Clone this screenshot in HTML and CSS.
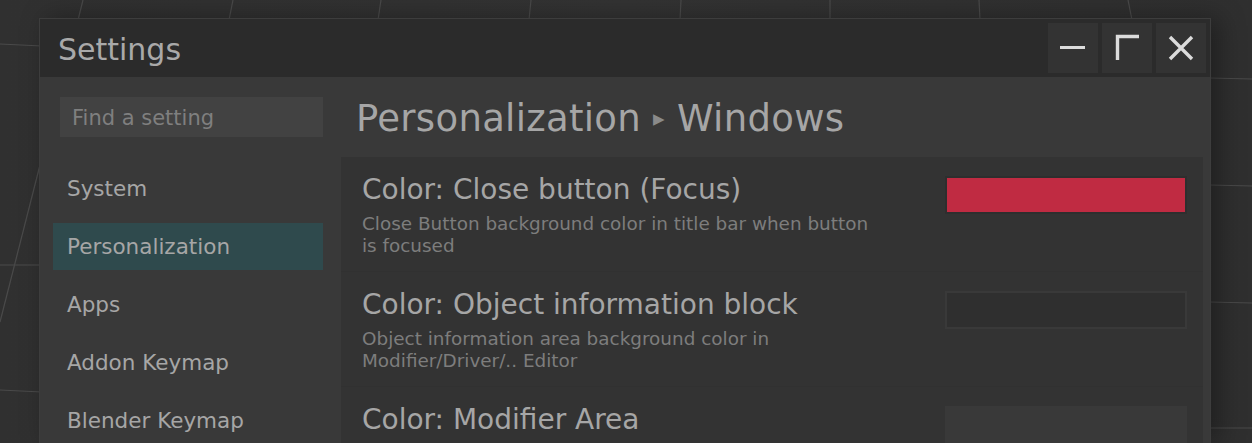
FILE: index.html
```html
<!DOCTYPE html>
<html>
<head>
<meta charset="utf-8">
<link rel="stylesheet" href="styles.css">
</head>
<body>
<svg class="grid" width="1252" height="443" viewBox="0 0 1252 443">
  <g stroke="#4a4a4a" stroke-width="1.2" fill="none">
    <line x1="83" y1="0" x2="78" y2="20"/>
    <line x1="233" y1="0" x2="229" y2="20"/>
    <line x1="381" y1="0" x2="378" y2="20"/>
    <line x1="531" y1="0" x2="529" y2="20"/>
    <line x1="681" y1="0" x2="680" y2="20"/>
    <line x1="830" y1="0" x2="830" y2="20"/>
    <line x1="979" y1="0" x2="980" y2="20"/>
    <line x1="1128" y1="0" x2="1132" y2="20"/>
    <line x1="0" y1="44" x2="42" y2="46"/>
    <line x1="0" y1="265" x2="42" y2="265"/>
    <line x1="0" y1="390" x2="42" y2="392"/>
    <line x1="40" y1="165" x2="0" y2="322"/>
    <line x1="1210" y1="78" x2="1252" y2="79"/>
    <line x1="1210" y1="185" x2="1252" y2="186"/>
    <line x1="1210" y1="302" x2="1252" y2="303"/>
    <line x1="1210" y1="428" x2="1252" y2="428"/>
  </g>
</svg>
<div class="window">
  <div class="titlebar">
    <div class="title">Settings</div>
    <div class="controls">
      <div class="ctrl">
        <svg width="50" height="50" viewBox="0 0 50 50"><rect x="12" y="23" width="25" height="3" fill="#dcdcdc"/></svg>
      </div>
      <div class="ctrl">
        <svg width="50" height="50" viewBox="0 0 50 50"><path d="M15.5 37 V13.5 H37" stroke="#dcdcdc" stroke-width="3.4" fill="none"/></svg>
      </div>
      <div class="ctrl">
        <svg width="50" height="50" viewBox="0 0 50 50"><path d="M14 14 L36 36 M36 14 L14 36" stroke="#dcdcdc" stroke-width="3.4" fill="none"/></svg>
      </div>
    </div>
  </div>
  <div class="body">
    <div class="sidebar">
      <div class="search">Find a setting</div>
      <div class="nav">
        <div class="nav-item">System</div>
        <div class="nav-item active">Personalization</div>
        <div class="nav-item">Apps</div>
        <div class="nav-item">Addon Keymap</div>
        <div class="nav-item">Blender Keymap</div>
      </div>
    </div>
    <div class="main">
      <div class="heading">Personalization <span class="sep">▸</span> Windows</div>
      <div class="panel">
        <div class="row">
          <div class="info">
            <div class="row-title">Color: Close button (Focus)</div>
            <div class="row-desc">Close Button background color in title bar when button is focused</div>
          </div>
          <div class="swatch red"></div>
        </div>
        <div class="row">
          <div class="info">
            <div class="row-title">Color: Object information block</div>
            <div class="row-desc">Object information area background color in Modifier/Driver/.. Editor</div>
          </div>
          <div class="swatch dark"></div>
        </div>
        <div class="row">
          <div class="info">
            <div class="row-title">Color: Modifier Area</div>
          </div>
          <div class="swatch light"></div>
        </div>
      </div>
    </div>
  </div>
</div>
</body>
</html>
```
FILE: styles.css
```css
html, body {
  margin: 0;
  padding: 0;
}
body {
  width: 1252px;
  height: 443px;
  overflow: hidden;
  background: linear-gradient(90deg, #303030 0%, #333333 50%, #2f2f2f 100%);
  font-family: "DejaVu Sans", sans-serif;
  position: relative;
  padding: 18px 0 0 39px;
  box-sizing: border-box;
}
.grid {
  position: absolute;
  left: 0;
  top: 0;
}
.window {
  position: relative;
  width: 1172px;
  height: 425px;
  box-sizing: border-box;
  border: 1px solid #3d3d3d;
  border-bottom: none;
  background: #393939;
  box-shadow: 8px 0 24px rgba(0,0,0,0.35);
  overflow: hidden;
}
.titlebar {
  height: 58px;
  background: #2b2b2b;
  display: flex;
  align-items: center;
  justify-content: space-between;
  padding: 0 4px 0 18px;
}
.title {
  font-size: 30px;
  color: #a9a9a9;
  padding-top: 2px;
}
.controls {
  display: flex;
  gap: 4px;
}
.ctrl {
  width: 50px;
  height: 50px;
  background: #333333;
}
.ctrl svg {
  display: block;
}
.body {
  display: flex;
  height: 366px;
}
.sidebar {
  width: 301px;
  flex: none;
  padding: 20px 0 0 13px;
  box-sizing: border-box;
}
.search {
  margin-left: 7px;
  width: 263px;
  height: 40px;
  background: #424242;
  color: #7f7f7f;
  font-size: 21px;
  line-height: 42px;
  padding-left: 12px;
  box-sizing: border-box;
}
.nav {
  margin-top: 28px;
  display: flex;
  flex-direction: column;
  gap: 11px;
}
.nav-item {
  width: 270px;
  height: 47px;
  line-height: 48px;
  padding-left: 14px;
  box-sizing: border-box;
  font-size: 21.5px;
  color: #a6a6a6;
}
.nav-item.active {
  background: #2f4a4d;
}
.main {
  width: 862px;
  flex: none;
}
.heading {
  height: 80px;
  line-height: 82px;
  font-size: 37px;
  letter-spacing: 0.3px;
  color: #a6a6a6;
  padding-left: 15px;
  white-space: nowrap;
}
.sep {
  font-size: 23px;
  color: #8a8a8a;
  vertical-align: 5px;
}
.panel {
  background: #333333;
  height: 310px;
}
.row {
  height: 115px;
  box-sizing: border-box;
  display: flex;
  justify-content: space-between;
  padding: 17px 16px 0 21px;
  border-bottom: 1px solid #313131;
}
.info {
  width: 512px;
}
.row-title {
  font-size: 28px;
  line-height: 32px;
  color: #a6a6a6;
  white-space: nowrap;
}
.row-desc {
  margin-top: 7px;
  font-size: 18.4px;
  line-height: 22px;
  color: #7d7d7d;
}
.swatch {
  margin-top: 2px;
  width: 242px;
  height: 38px;
  box-sizing: border-box;
}
.swatch.red {
  background: #c02b42;
  border: 2px solid #2e2e2e;
}
.swatch.dark {
  background: #2f2f2f;
  border: 2px solid #393939;
}
.swatch.light {
  background: #393939;
}
```
